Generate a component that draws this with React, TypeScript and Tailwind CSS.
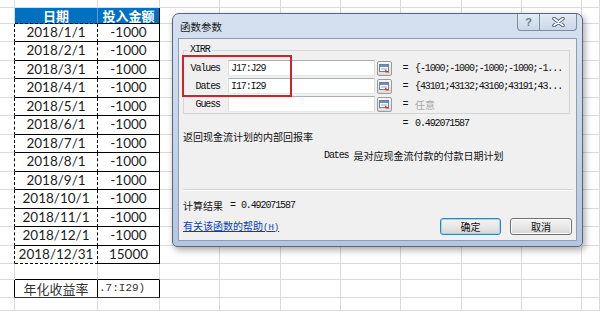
import React from "react";

const COLS = [
  "w-[15px]",
  "w-[83px]",
  "w-[62px]",
  "w-[60px]",
  "w-[61px]",
  "w-[60px]",
  "w-[60px]",
  "w-[61px]",
  "w-[60px]",
  "w-[60px]",
  "w-[18px]",
];

const DATA = [
  ["2018/1/1", "-1000"],
  ["2018/2/1", "-1000"],
  ["2018/3/1", "-1000"],
  ["2018/4/1", "-1000"],
  ["2018/5/1", "-1000"],
  ["2018/6/1", "-1000"],
  ["2018/7/1", "-1000"],
  ["2018/8/1", "-1000"],
  ["2018/9/1", "-1000"],
  ["2018/10/1", "-1000"],
  ["2018/11/1", "-1000"],
  ["2018/12/1", "-1000"],
  ["2018/12/31", "15000"],
];

type Row = { h: string; kind: "top" | "head" | "data" | "gap" | "sum" | "rest"; a?: string; b?: string; last?: boolean };

const ROWS: Row[] = [
  { h: "h-[8px]", kind: "top" },
  { h: "h-[16px]", kind: "head", a: "日期", b: "投入金额" },
  ...DATA.map(([a, b], i) => ({
    h: i % 2 === 0 ? "h-[18px]" : "h-[19px]",
    kind: "data" as const,
    a,
    b,
    last: i === DATA.length - 1,
  })),
  { h: "h-[16px]", kind: "gap" },
  { h: "h-[18px]", kind: "sum", a: "年化收益率", b: ".7:I29)" },
  { h: "h-[13px]", kind: "rest" },
];

const mono = "font-['Liberation_Mono',monospace] text-[10px] tracking-[-1.1px]";
const cjk = "font-['Noto_Sans_CJK_SC',sans-serif]";

function cellClass(row: Row, col: number) {
  const base = "shrink-0 flex items-center justify-center border-r border-b border-[#dadada] leading-none";
  if (row.kind === "head") {
    if (col === 1) return `${base} bg-[#0070c0] text-white font-bold text-[13px] ${cjk} border-r-[#5f9fd4] border-b-black [border-bottom-style:dashed]`;
    if (col === 2) return `${base} bg-[#0070c0] text-white font-bold text-[13px] ${cjk} border-r-black border-b-black`;
  }
  if (row.kind === "data") {
    if (col === 0) return `${base} border-r-black [border-right-style:dashed]`;
    if (col === 1)
      return row.last
        ? `${base} border-r-black [border-right-style:dashed] border-b-black [border-bottom-style:dashed]`
        : `${base} border-r-black [border-right-style:dashed] border-b-black`;
    if (col === 2) return `${base} border-r-black border-b-black`;
  }
  if (row.kind === "gap" && (col === 1 || col === 2)) return `${base} border-b-black`;
  if (row.kind === "sum") {
    if (col === 0) return `${base} border-r-black`;
    if (col === 1) return `${base} border-r-black border-b-[#333] text-[13px] text-[#333] ${cjk}`;
    if (col === 2) return `${base} !justify-start pl-[1px] border-r-black border-b-[#333] text-[11px] text-[#333] font-['Liberation_Mono',monospace]`;
  }
  return base;
}

function Sheet() {
  return (
    <div className="flex flex-col bg-white">
      {ROWS.map((row, r) => (
        <div key={r} className={`flex ${row.h}`}>
          {COLS.map((w, c) => (
            <div key={c} className={`${w} ${cellClass(row, c)}`}>
              {row.kind === "data" && c === 1 && (
                <span className="font-['Lato',sans-serif] text-[13.5px] text-[#1c1c1c]">{row.a}</span>
              )}
              {row.kind === "data" && c === 2 && (
                <span className="font-['Lato',sans-serif] text-[13.5px] text-[#1c1c1c]">{row.b}</span>
              )}
              {(row.kind === "head" || row.kind === "sum") && c === 1 && row.a}
              {(row.kind === "head" || row.kind === "sum") && c === 2 && row.b}
            </div>
          ))}
        </div>
      ))}
    </div>
  );
}

function RefButton() {
  return (
    <div className="ml-[2px] flex h-[15px] w-[15px] shrink-0 items-center justify-center rounded-[2px] border border-[#9a9a9a] bg-linear-to-b from-[#fafafa] to-[#dcdcdc]">
      <svg width="11" height="9" viewBox="0 0 11 9">
        <rect x="0.5" y="0.5" width="9" height="7" fill="#fff" stroke="#6f7f95" />
        <rect x="1" y="1" width="8" height="2" fill="#6a8fc0" />
        <line x1="2" y1="5" x2="8" y2="5" stroke="#9aa5b5" />
        <path d="M6 5.5 L10.5 8.5 L6.5 8.5 Z" fill="#d22a2a" />
      </svg>
    </div>
  );
}

function ArgRow({ label, value, result, gray }: { label: string; value: string; result: string; gray?: boolean }) {
  return (
    <div className="flex h-[18px] items-center">
      <div className={`w-[36px] text-right ${mono}`}>{label}</div>
      <div className={`ml-[8px] flex h-[16px] w-[147px] items-center border border-[#abadb3] border-l-[#dbdfe6] border-r-[#dbdfe6] border-b-[#e3e9ef] bg-white pl-[2px] ${mono} text-[10.5px]`}>
        {value}
      </div>
      <RefButton />
      <div className={`ml-[9px] w-[8px] text-center ${mono}`}>=</div>
      {gray ? (
        <div className={`ml-[6px] text-[10px] text-[#a8a8a8] ${cjk}`}>{result}</div>
      ) : (
        <div className={`ml-[6px] whitespace-nowrap ${mono}`}>{result}</div>
      )}
    </div>
  );
}

function DialogButton({ label, primary }: { label: string; primary?: boolean }) {
  return (
    <div
      className={`flex h-[17px] items-center justify-center rounded-[3px] border bg-linear-to-b from-[#f3f3f3] via-[#e8e8e8] to-[#d6d6d6] text-[10px] leading-none ${cjk} ${
        primary ? "w-[61px] border-[#3c7fb1] shadow-[inset_0_0_0_1px_#9fd4f3]" : "w-[62px] border-[#707070] shadow-[inset_0_0_0_1px_#fbfbfb]"
      }`}
    >
      {label}
    </div>
  );
}

function Dialog() {
  return (
    <div className="absolute left-[172px] top-[13px] flex h-[234px] w-[411px] flex-col rounded-t-[7px] rounded-b-[5px] border border-[#56667e] bg-linear-to-b from-[#d5e1ef] via-[#c5d5e9] to-[#b3c6df] px-[5px] pb-[5px] shadow-[2px_3px_7px_rgba(0,0,0,0.35)]">
      <div className="flex h-[24px] shrink-0">
        <span className={`ml-[2px] mt-[7px] text-[10.5px] leading-[12px] text-[#1b1b1b] ${cjk}`}>函数参数</span>
        <div className="ml-auto flex h-[17px]">
          <div className="flex w-[23px] items-center justify-center rounded-bl-[4px] border border-t-0 border-[#7d8da4] bg-linear-to-b from-[#e3ebf5] to-[#c9d7e8] text-[11px] font-bold leading-none text-[#6b7a90] font-['Liberation_Sans',sans-serif]">
            ?
          </div>
          <div className="flex w-[37px] items-center justify-center rounded-br-[4px] border border-l-0 border-t-0 border-[#7d8da4] bg-linear-to-b from-[#e3ebf5] to-[#c9d7e8]">
            <svg width="13" height="10" viewBox="0 0 13 10">
              <path d="M2 1.5 L11 8.5 M11 1.5 L2 8.5" stroke="#55657b" strokeWidth="3.6" strokeLinecap="round" />
              <path d="M2 1.5 L11 8.5 M11 1.5 L2 8.5" stroke="#fff" strokeWidth="1.6" strokeLinecap="round" />
            </svg>
          </div>
        </div>
      </div>

      <div className="flex flex-1 flex-col border border-[#8c9db5] bg-[#f0f0f0] text-[#111]">
        <fieldset className="ml-[4px] mr-[6px] mt-[5px] border border-[#d5d5d5] pt-[3px]">
          <legend className={`ml-[4px] px-[2px] leading-[12px] ${mono}`}>XIRR</legend>
          <ArgRow label="Values" value="J17:J29" result="{-1000;-1000;-1000;-1000;-1..." />
          <ArgRow label="Dates" value="I17:I29" result="{43101;43132;43160;43191;43..." />
          <ArgRow label="Guess" value="" result="任意" gray />
        </fieldset>

        <div className="mt-[3px] flex h-[12px] items-center pl-[222px]">
          <div className={`w-[8px] text-center ${mono}`}>=</div>
          <div className={`ml-[6px] ${mono}`}>0.492071587</div>
        </div>
        <div className={`mt-[1px] flex h-[12px] items-center pl-[4px] text-[10px] ${cjk}`}>返回现金流计划的内部回报率</div>
        <div className="mt-[7px] flex h-[12px] items-center pl-[145px]">
          <span className={mono}>Dates</span>
          <span className={`ml-[5px] text-[10px] ${cjk}`}>是对应现金流付款的付款日期计划</span>
        </div>

        <div className="ml-[4px] mr-[3px] mt-[28px] border-t border-b border-t-[#d5d5d5] border-b-white" />

        <div className="mt-[8px] flex h-[12px] items-center pl-[4px]">
          <span className={`text-[10px] ${cjk}`}>计算结果</span>
          <span className={`ml-[7px] ${mono}`}>=</span>
          <span className={`ml-[6px] ${mono}`}>0.492071587</span>
        </div>

        <div className="mt-[7px] flex h-[17px] items-center pl-[4px] pr-[4px]">
          <span className={`text-[10px] text-[#0a3fae] underline ${cjk}`}>
            有关该函数的帮助<span className="font-['Liberation_Mono',monospace] text-[9px]">(H)</span>
          </span>
          <div className="ml-auto flex gap-[9px]">
            <DialogButton label="确定" primary />
            <DialogButton label="取消" />
          </div>
        </div>
      </div>
    </div>
  );
}

export default function App() {
  return (
    <div className="relative h-[311px] w-[600px] overflow-hidden bg-white">
      <Sheet />
      <Dialog />
      <div className="absolute left-[182px] top-[55px] h-[42px] w-[110px] border-2 border-[#c8262c]" />
    </div>
  );
}
